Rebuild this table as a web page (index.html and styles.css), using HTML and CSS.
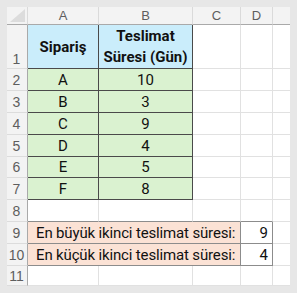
FILE: index.html
```html
<!DOCTYPE html>
<html lang="tr">
<head>
<meta charset="utf-8">
<link rel="stylesheet" href="styles.css">
</head>
<body>
<div class="sheet">
  <div class="corner"><span class="tri"></span></div>
  <div class="colh">A</div>
  <div class="colh">B</div>
  <div class="colh">C</div>
  <div class="colh">D</div>
  <div class="colh last"></div>

  <div class="rowh r1">1</div>
  <div class="cell blue t-l bold">Sipariş</div>
  <div class="cell blue t-r bold two">Teslimat<br>Süresi (Gün)</div>
  <div class="cell"></div><div class="cell"></div><div class="cell last"></div>

  <div class="rowh">2</div>
  <div class="cell green t-l">A</div><div class="cell green t-r">10</div>
  <div class="cell"></div><div class="cell"></div><div class="cell last"></div>

  <div class="rowh">3</div>
  <div class="cell green t-l">B</div><div class="cell green t-r">3</div>
  <div class="cell"></div><div class="cell"></div><div class="cell last"></div>

  <div class="rowh">4</div>
  <div class="cell green t-l">C</div><div class="cell green t-r">9</div>
  <div class="cell"></div><div class="cell"></div><div class="cell last"></div>

  <div class="rowh">5</div>
  <div class="cell green t-l">D</div><div class="cell green t-r">4</div>
  <div class="cell"></div><div class="cell"></div><div class="cell last"></div>

  <div class="rowh">6</div>
  <div class="cell green t-l">E</div><div class="cell green t-r">5</div>
  <div class="cell"></div><div class="cell"></div><div class="cell last"></div>

  <div class="rowh">7</div>
  <div class="cell green t-l">F</div><div class="cell green t-r">8</div>
  <div class="cell"></div><div class="cell"></div><div class="cell last"></div>

  <div class="rowh">8</div>
  <div class="cell above"></div><div class="cell above"></div>
  <div class="cell above"></div><div class="cell above"></div><div class="cell last"></div>

  <div class="rowh">9</div>
  <div class="cell orange span3 box">En büyük ikinci teslimat süresi:</div>
  <div class="cell num box">9</div>
  <div class="cell last"></div>

  <div class="rowh">10</div>
  <div class="cell orange span3 box">En küçük ikinci teslimat süresi:</div>
  <div class="cell num box">4</div>
  <div class="cell last"></div>

  <div class="rowh">11</div>
  <div class="cell"></div><div class="cell"></div>
  <div class="cell"></div><div class="cell"></div><div class="cell last"></div>
</div>
</body>
</html>
```

FILE: styles.css
```css
html, body {
  margin: 0;
  padding: 0;
  background: #e7e7e7;
}
body {
  width: 297px;
  height: 293px;
  overflow: hidden;
  font-family: "Roboto", "Liberation Sans", sans-serif;
}
.sheet {
  margin: 7px 0 0 7px;
  width: 283px;
  height: 279px;
  background: #ffffff;
  display: grid;
  grid-template-columns: 21px 71px 94px 48px 32px 17px;
  grid-template-rows: 18px 44px 22px 22px 22px 22px 21px 22px 22px 22px 22px 20px;
}
.corner {
  background: #f3f3f3;
  border-right: 1px solid #dadada;
  border-bottom: 1px solid #a9a9a9;
  box-sizing: border-box;
  position: relative;
}
.tri {
  position: absolute;
  right: 2px;
  bottom: 2px;
  width: 0;
  height: 0;
  border-left: 15px solid transparent;
  border-bottom: 13px solid #dcdcdc;
}
.colh {
  background: #f3f3f3;
  color: #5e5e5e;
  font-family: "Liberation Sans", sans-serif;
  font-size: 13px;
  display: flex;
  align-items: center;
  justify-content: center;
  box-sizing: border-box;
  border-right: 1px solid #dadada;
  border-bottom: 1px solid #a9a9a9;
}
.colh.last { border-right: none; }
.rowh {
  background: #f3f3f3;
  color: #5e5e5e;
  font-family: "Liberation Sans", sans-serif;
  font-size: 14px;
  display: flex;
  align-items: center;
  justify-content: center;
  box-sizing: border-box;
  border-right: 1px solid #a9a9a9;
  border-bottom: 1px solid #dcdcdc;
  padding-right: 1px;
}
.rowh.r1 {
  align-items: flex-end;
  padding-bottom: 1px;
}
.cell {
  box-sizing: border-box;
  border-right: 1px solid #e1e1e1;
  border-bottom: 1px solid #e1e1e1;
  font-size: 15px;
  color: #111111;
  display: flex;
  align-items: center;
  justify-content: center;
  white-space: nowrap;
}
.cell.last { border-right: none; }
.bold { font-weight: bold; }
.two {
  flex-direction: column;
  line-height: 21px;
  text-align: center;
}
.blue { background: #caedfb; }
.green { background: #daf2d0; }
.orange {
  background: #fbe2d5;
  justify-content: flex-start;
  padding-left: 8px;
  letter-spacing: -0.15px;
}
.t-l, .t-r {
  border-bottom: 1px solid #4a4a4a;
}
.t-l { border-right: 1px solid #4a4a4a; }
.t-r { border-right: 1px solid #4a4a4a; }
.above { border-bottom: 1px solid #8c8c8c; }
.box {
  border-right: 1px solid #8c8c8c;
  border-bottom: 1px solid #8c8c8c;
}
.span3 { grid-column: span 3; }
.num {
  justify-content: flex-end;
  padding-right: 4px;
}
```
